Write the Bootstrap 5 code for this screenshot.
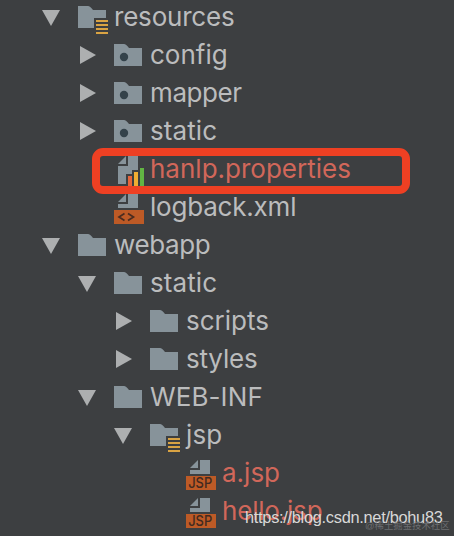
<!DOCTYPE html>
<html lang="en">
<head>
<meta charset="utf-8">
<meta name="viewport" content="width=device-width, initial-scale=1">
<title>Project tree</title>
<link href="https://cdn.jsdelivr.net/npm/bootstrap@5.3.0/dist/css/bootstrap.min.css" rel="stylesheet">
<style>
body{background:#3d3f41;color:#bbbcbd;font-family:Inter,"Noto Sans",sans-serif;height:536px}
.tree{margin-top:-2px;padding-left:42px}
.item{height:38px;font-size:26px;line-height:38px;letter-spacing:0}
.lv1{padding-left:36px}.lv2{padding-left:72px}.lv4{padding-left:144px}
.tight{letter-spacing:-.2px}
.tighter{letter-spacing:-.4px}
.wide{letter-spacing:.1px}
.item svg{width:36px;height:38px;flex:none}
.fresh{color:#d1675a}
.frame{left:92px;top:148px;width:318px;height:46px;border:8px solid #ee4023;border-radius:11px}
.mark-url{left:245px;top:505px;font:16.4px/24px "Liberation Sans",sans-serif;letter-spacing:-.3px;color:#d8d8d8}
.mark-site{left:365px;top:517px;font:9.4px/18px "Liberation Sans","Noto Sans CJK SC",sans-serif;color:#6c6e70}
</style>
<script src="https://cdn.jsdelivr.net/npm/bootstrap@5.3.0/dist/js/bootstrap.bundle.min.js"></script>
</head>
<body class="position-relative overflow-hidden">
<svg class="d-none">
<symbol id="down" viewBox="0 0 36 38"><path d="M0 12H18L9 28Z" fill="#adafb0"/></symbol>
<symbol id="right" viewBox="0 0 36 38"><path d="M2 10V28L18 19Z" fill="#adafb0"/></symbol>
<symbol id="folder" viewBox="0 0 36 38"><path d="M0 8H10Q12 8 15 12H28V30H0Z" fill="#87939a"/></symbol>
<symbol id="package" viewBox="0 0 36 38"><path d="M0 8H10Q12 8 15 12H28V30H0Z" fill="#87939a"/><circle cx="10" cy="21" r="4.2" fill="#34424a"/></symbol>
<symbol id="res" viewBox="0 0 36 38"><path d="M0 8H10Q12 8 15 12H28V20H16V30H0Z" fill="#87939a"/><path d="M18 23h12M18 27h12M18 31h12M18 35h12" stroke="#d9a343" stroke-width="2"/></symbol>
<symbol id="props" viewBox="0 0 36 38"><path d="M14 6H24V20H18V24H12V34H4V16H14Z M4 14L12 6V14Z" fill="#87939a"/><path d="M14 26h4v10h-4z" fill="#e5653b"/><path d="M20 22h4v14h-4z" fill="#f0ad32"/><path d="M26 18h4v18h-4z" fill="#62b543"/></symbol>
<symbol id="page" viewBox="0 0 36 38"><path d="M14 6H24V20H4V16H14Z M4 14L12 6V14Z" fill="#87939a"/><path d="M0 22H30V36H0Z" fill="#bd5a26"/></symbol>
<symbol id="xml" viewBox="0 0 36 38"><use href="#page"/><path d="M10.5 25.5L5 29L10.5 32.5M14 25.5L19.5 29L14 32.5" fill="none" stroke="#492c20" stroke-width="1.7"/></symbol>
<symbol id="jsp" viewBox="0 0 36 38"><use href="#page"/><text x="2.2" y="34.2" textLength="24" lengthAdjust="spacingAndGlyphs" font-family="Inter,sans-serif" font-size="14.5" font-weight="500" letter-spacing="0" fill="#432a20">JSP</text></symbol>
</svg>
<main class="tree d-flex flex-column">
<div class="item d-flex"><svg><use href="#down"/></svg><svg><use href="#res"/></svg><span class="tight">resources</span></div>
<div class="item lv1 d-flex"><svg><use href="#right"/></svg><svg><use href="#package"/></svg><span>config</span></div>
<div class="item lv1 d-flex"><svg><use href="#right"/></svg><svg><use href="#package"/></svg><span class="tighter">mapper</span></div>
<div class="item lv1 d-flex"><svg><use href="#right"/></svg><svg><use href="#package"/></svg><span class="wide">static</span></div>
<div class="item lv2 d-flex"><svg><use href="#props"/></svg><span class="fresh">hanlp.properties</span></div>
<div class="item lv2 d-flex"><svg><use href="#xml"/></svg><span class="tight">logback.xml</span></div>
<div class="item d-flex"><svg><use href="#down"/></svg><svg><use href="#folder"/></svg><span class="tighter">webapp</span></div>
<div class="item lv1 d-flex"><svg><use href="#down"/></svg><svg><use href="#folder"/></svg><span class="wide">static</span></div>
<div class="item lv2 d-flex"><svg><use href="#right"/></svg><svg><use href="#folder"/></svg><span>scripts</span></div>
<div class="item lv2 d-flex"><svg><use href="#right"/></svg><svg><use href="#folder"/></svg><span class="tight">styles</span></div>
<div class="item lv1 d-flex"><svg><use href="#down"/></svg><svg><use href="#folder"/></svg><span class="wide">WEB-INF</span></div>
<div class="item lv2 d-flex"><svg><use href="#down"/></svg><svg><use href="#res"/></svg><span class="wide">jsp</span></div>
<div class="item lv4 d-flex"><svg><use href="#jsp"/></svg><span class="fresh">a.jsp</span></div>
<div class="item lv4 d-flex"><svg><use href="#jsp"/></svg><span class="fresh tight">hello.jsp</span></div>
</main>
<div class="frame position-absolute"></div>
<div class="mark-url position-absolute text-nowrap">https://blog.csdn.net/bohu83</div>
<div class="mark-site position-absolute text-nowrap">@稀土掘金技术社区</div>
</body>
</html>
